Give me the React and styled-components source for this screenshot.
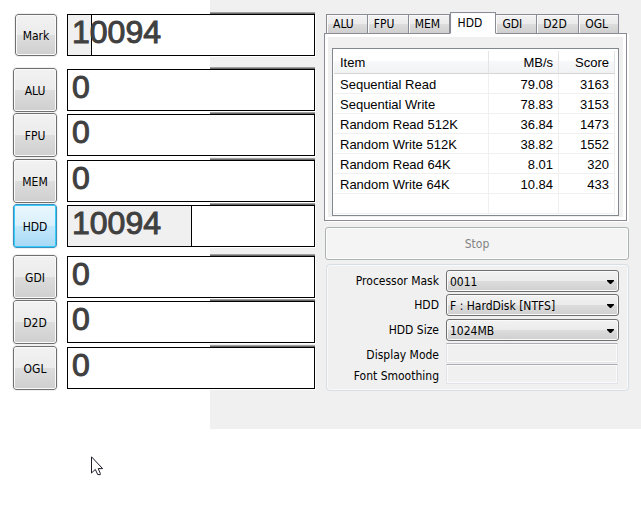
import React from "react";
import styled, { createGlobalStyle, css } from "styled-components";

const Global = createGlobalStyle`
  * { box-sizing: border-box; }
  body { margin: 0; background: #fff; }
  button, input, select { font: inherit; color: inherit; margin: 0; }
`;

const Page = styled.main`
  position: relative;
  min-height: 100vh;
  font-family: "DejaVu Sans Condensed", "DejaVu Sans", sans-serif;
  font-size: 12px;
  line-height: 16px;
  color: #000;
`;

const Window = styled.div`
  display: flex;
  gap: 9px;
  padding: 12px 13px 38px 13px;
  background: linear-gradient(to right, #fff 210px, #f0f0f0 210px);
`;

const Scores = styled.section`
  flex: 0 0 302px;
  display: flex;
  flex-direction: column;
  padding-top: 1px;
`;

const Group = styled.div`
  display: grid;
  grid-template-rows: ${(p) => p.$rows};
  align-items: start;
  margin-bottom: ${(p) => p.$after || 0}px;
`;

const ScoreRow = styled.div`
  display: flex;
  align-items: center;
  justify-content: space-between;
  height: 44px;
`;

const RunButton = styled.button`
  width: ${(p) => (p.$small ? 42 : 44)}px;
  height: ${(p) => (p.$small ? 42 : 44)}px;
  margin-left: ${(p) => (p.$small ? 2 : 0)}px;
  padding: 2px 0 0;
  border: 1px solid #707070;
  border-radius: 3px;
  outline: 1px solid #f0f0f0;
  background: linear-gradient(#f2f2f2, #ebebeb 50%, #dddddd 50%, #cfcfcf);
  box-shadow: inset 0 0 0 1px #fafafa;
  ${(p) =>
    p.$focused &&
    css`
      border-color: #3c8fc1;
      background: linear-gradient(#eaf6fd, #d9f0fc 50%, #c4e8fb 50%, #a7d9f5);
      box-shadow: inset 0 0 0 1px #34cdf9;
    `}
`;

const ScoreBox = styled.output`
  position: relative;
  display: block;
  width: 248px;
  height: 42px;
  border: 1px solid #000;
  background: #fff;
  box-shadow: 1px 1px 0 #fff;
  &::before {
    content: "";
    position: absolute;
    top: -3px;
    left: 142px;
    right: -1px;
    height: 2px;
    background: linear-gradient(#a0a0a0 1px, #696969 1px);
  }
`;

const Meter = styled.span`
  position: absolute;
  inset: 0 auto 0 0;
  background: #f0f0f0;
  border-right: 1px solid #000;
`;

const Digits = styled.span`
  position: relative;
  display: block;
  padding-left: 4px;
  font: 32px/34px "Liberation Sans", sans-serif;
  color: #404040;
  -webkit-text-stroke: 1px #404040;
`;

const Side = styled.section`
  flex: 1;
  min-width: 0;
`;

const Tabs = styled.div`
  display: flex;
  align-items: flex-end;
  height: 22px;
  padding: 0 9px 0 2px;
`;

const Tab = styled.button`
  flex: ${(p) => p.$grow} 1 0;
  min-width: 0;
  height: 20px;
  padding: 0 0 0 6px;
  text-align: left;
  border: 1px solid #898c95;
  border-left-width: ${(p) => (p.$first ? 1 : 0)}px;
  background: linear-gradient(#f2f2f2, #ebebeb 50%, #dddddd 50%, #cfcfcf);
  box-shadow: inset 1px 1px 0 #fafafa;
  ${(p) =>
    p.$active &&
    css`
      position: relative;
      height: 22px;
      padding: 0 0 1px 7px;
      border-bottom-color: #fff;
      background: #fff;
    `}
`;

const TabPanel = styled.div`
  margin: -1px 1px 0 0;
  height: 188px;
  padding: 3px;
  border: 1px solid #898c95;
  background: #fff;
  box-shadow: 2px 1px 0 #fff;
`;

const PanelInner = styled.div`
  height: 100%;
  padding: 11px 4px 0 4px;
  background: #f0f0f0;
`;

const List = styled.div`
  height: 168px;
  padding: 2px 3px 0 1px;
  border: 1px solid #828790;
  background: #fff;
  font: 13px/16px "Liberation Sans", sans-serif;
`;

const Table = styled.table`
  width: 100%;
  border-collapse: separate;
  border-spacing: 0;
  table-layout: fixed;
`;

const HeadCell = styled.th`
  height: 23px;
  width: ${(p) => p.$w};
  padding: 1px 5px 0 6px;
  font-weight: 400;
  text-align: ${(p) => (p.$num ? "right" : "left")};
  background: linear-gradient(#fff 45%, #f7f8fa 45%, #f1f2f4);
  border-right: 1px solid #e3e4e6;
  border-bottom: 1px solid #d5d5d5;
`;

const Cell = styled.td`
  height: 20px;
  padding: 2px 5px 0 6px;
  text-align: ${(p) => (p.$num ? "right" : "left")};
  border-right: 1px solid #f0f0f0;
  border-bottom: 1px solid #f0f0f0;
`;

const StopButton = styled.button`
  display: block;
  width: 100%;
  height: 33px;
  margin: 6px 0 4px 1px;
  border: 1px solid #adb2b5;
  border-radius: 3px;
  background: #f4f4f4;
  box-shadow: inset 0 0 0 1px #fcfcfc;
  && { color: #838383; }
`;

const Options = styled.form`
  display: grid;
  grid-template-columns: 112px 1fr;
  grid-template-rows: 24px 25px 24px 21px 20px;
  column-gap: 7px;
  align-items: start;
  margin: 0 -1px 0 2px;
  padding: 5px 9px 6px 0;
  border: 1px solid #d5dfe5;
  border-radius: 4px;
  box-shadow: inset 0 0 0 1px #fafafa;
`;

const Label = styled.label`
  padding-top: ${(p) => (p.$short ? 4 : 3)}px;
  text-align: right;
  white-space: nowrap;
`;

const SelectWrap = styled.div`
  position: relative;
`;

const Select = styled.select`
  display: block;
  appearance: none;
  width: 100%;
  height: 22px;
  padding: 2px 20px 0 3px;
  border: 1px solid #707070;
  border-radius: 3px;
  background: linear-gradient(#f2f2f2, #ebebeb 50%, #dddddd 50%, #cfcfcf);
  box-shadow: inset 0 0 0 1px #fafafa;
`;

const Arrow = styled.svg`
  position: absolute;
  right: 5px;
  top: 10px;
  pointer-events: none;
`;

const Field = styled.input`
  width: calc(100% - 1px);
  height: 20px;
  border: 1px solid #e2e3ea;
  border-top-color: #abadb3;
  border-radius: 1px;
  background: #f0f0f0;
  box-shadow: inset 0 0 0 1px #fafafa;
`;

const Pointer = styled.svg`
  position: absolute;
  left: 91px;
  top: 456px;
`;

const groups = [
  { rows: "44px", after: 11, items: [["Mark", "10094", 24 / 246]] },
  {
    rows: "45px 46px 45px 44px",
    after: 7,
    items: [["ALU", "0"], ["FPU", "0"], ["MEM", "0"], ["HDD", "10094", 124 / 246]],
  },
  { rows: "45px 46px 44px", items: [["GDI", "0"], ["D2D", "0"], ["OGL", "0"]] },
];

const tabs = [["ALU", 34], ["FPU", 34], ["MEM", 34], ["HDD", 38], ["GDI", 34], ["D2D", 35], ["OGL", 33]];

const results = [
  ["Sequential Read", "79.08", "3163"],
  ["Sequential Write", "78.83", "3153"],
  ["Random Read 512K", "36.84", "1473"],
  ["Random Write 512K", "38.82", "1552"],
  ["Random Read 64K", "8.01", "320"],
  ["Random Write 64K", "10.84", "433"],
];

const selects = [
  ["mask", "Processor Mask", "0011"],
  ["drive", "HDD", "F : HardDisk [NTFS]"],
  ["size", "HDD Size", "1024MB"],
];

const fields = [["display", "Display Mode"], ["smoothing", "Font Smoothing"]];

export default function App() {
  return (
    <Page>
      <Global />
      <Window>
        <Scores>
          {groups.map((g) => (
            <Group key={g.rows} $rows={g.rows} $after={g.after}>
              {g.items.map(([name, score, part]) => (
                <ScoreRow key={name}>
                  <RunButton type="button" $small={name === "Mark"} $focused={name === "HDD"}>
                    {name}
                  </RunButton>
                  <ScoreBox aria-label={name}>
                    {part && <Meter style={{ width: `${part * 100}%` }} />}
                    <Digits>{score}</Digits>
                  </ScoreBox>
                </ScoreRow>
              ))}
            </Group>
          ))}
        </Scores>
        <Side>
          <Tabs role="tablist">
            {tabs.map(([name, grow], i) => (
              <Tab
                key={name}
                type="button"
                role="tab"
                aria-selected={name === "HDD"}
                $grow={grow}
                $first={i === 0 || name === "HDD"}
                $active={name === "HDD"}
              >
                {name}
              </Tab>
            ))}
          </Tabs>
          <TabPanel role="tabpanel">
            <PanelInner>
              <List>
                <Table>
                  <thead>
                    <tr>
                      <HeadCell>Item</HeadCell>
                      <HeadCell $num $w="70px">MB/s</HeadCell>
                      <HeadCell $num $w="56px">Score</HeadCell>
                    </tr>
                  </thead>
                  <tbody>
                    {results.map(([item, rate, score]) => (
                      <tr key={item}>
                        <Cell>{item}</Cell>
                        <Cell $num>{rate}</Cell>
                        <Cell $num>{score}</Cell>
                      </tr>
                    ))}
                    <tr>
                      <Cell />
                      <Cell />
                      <Cell />
                    </tr>
                  </tbody>
                </Table>
              </List>
            </PanelInner>
          </TabPanel>
          <StopButton type="button" disabled>
            Stop
          </StopButton>
          <Options>
            {selects.map(([id, label, value]) => (
              <React.Fragment key={id}>
                <Label htmlFor={id}>{label}</Label>
                <SelectWrap>
                  <Select id={id} defaultValue={value}>
                    <option>{value}</option>
                  </Select>
                  <Arrow width="7" height="4" viewBox="0 0 7 4" aria-hidden="true">
                    <path d="M0 0H7V1L4 4H3L0 1Z" fill="#000" />
                  </Arrow>
                </SelectWrap>
              </React.Fragment>
            ))}
            {fields.map(([id, label]) => (
              <React.Fragment key={id}>
                <Label htmlFor={id} $short>
                  {label}
                </Label>
                <Field id={id} type="text" disabled />
              </React.Fragment>
            ))}
          </Options>
        </Side>
      </Window>
      <Pointer width="12" height="20" viewBox="0 0 12 20" aria-hidden="true">
        <path
          d="M.5 .8V17L4.3 13.4L6.7 18.6H9.3V17.4L7.2 12.6H11.6Z"
          fill="#fff"
          stroke="#1c1c2c"
        />
      </Pointer>
    </Page>
  );
}
